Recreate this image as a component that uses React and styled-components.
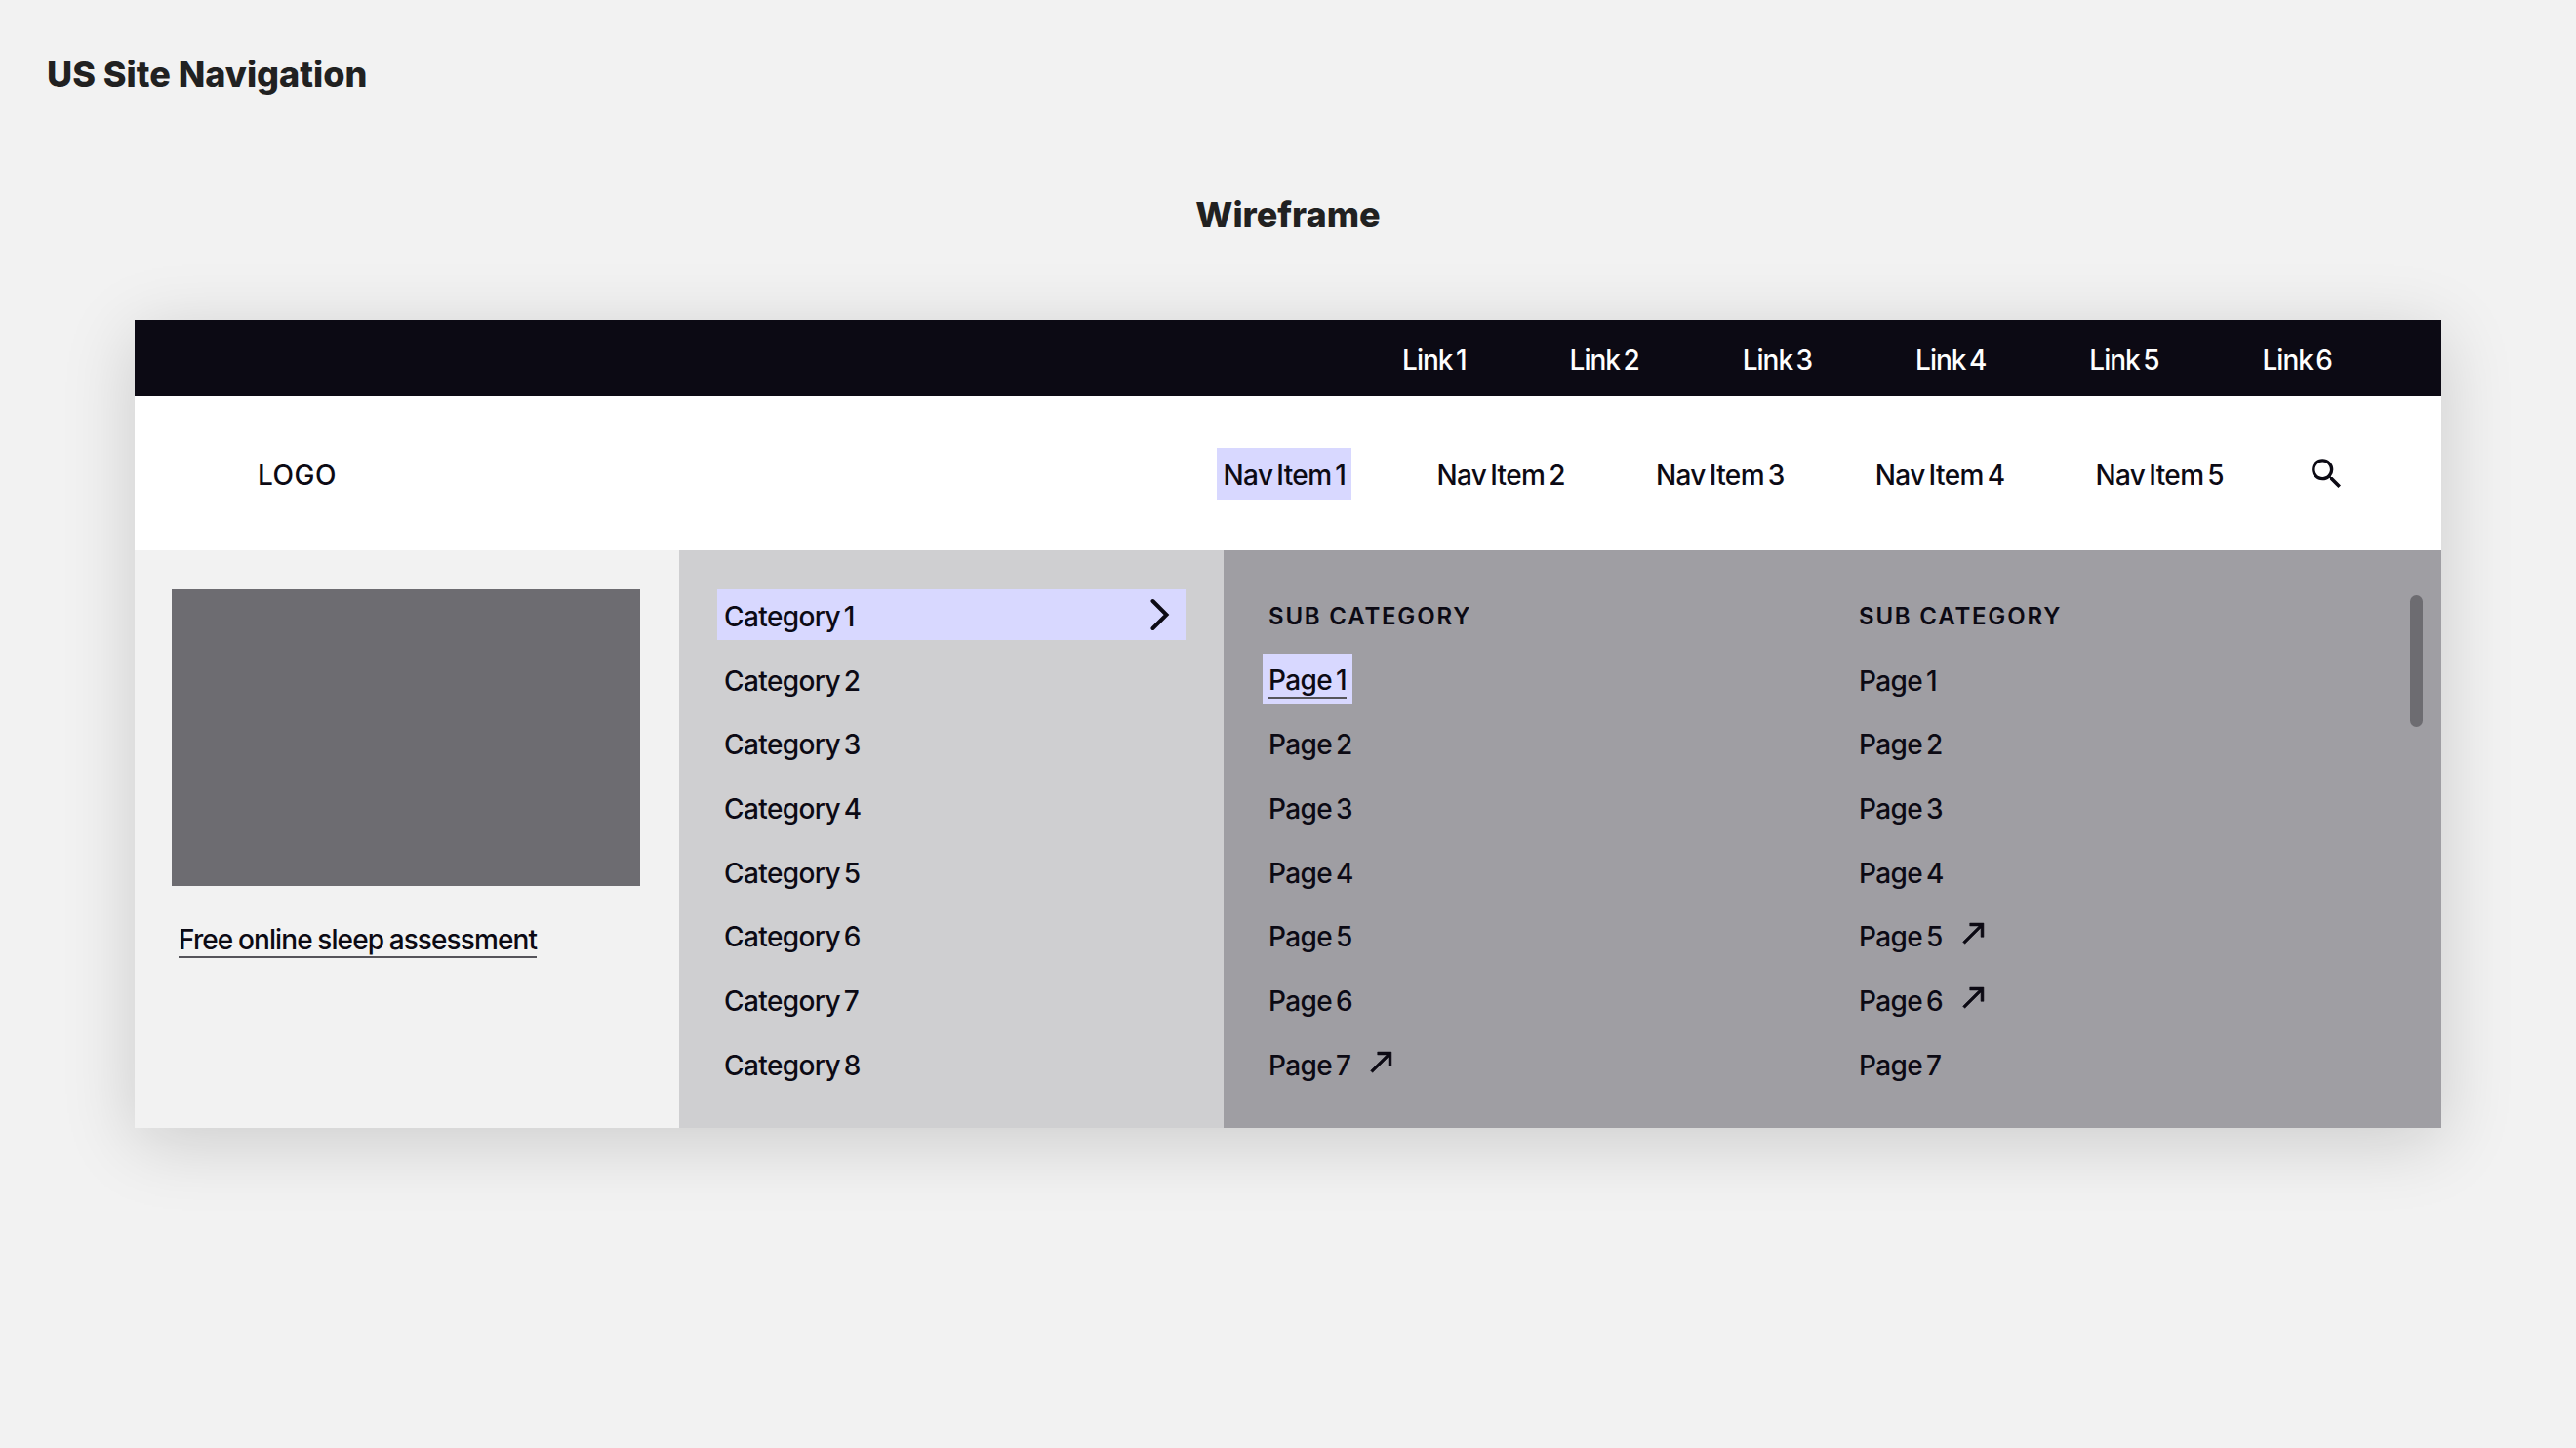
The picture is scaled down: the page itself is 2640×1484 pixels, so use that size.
import styled, { createGlobalStyle } from "styled-components";
import { MdSearch } from "react-icons/md";

const GlobalStyle = createGlobalStyle`
  html, body {
    margin: 0;
    padding: 0;
    background: #f2f2f2;
    font-family: "Inter", "Liberation Sans", sans-serif;
  }
`;

const Page = styled.div`
  width: 2640px;
  height: 1484px;
  overflow: hidden;
  padding-top: 54px;
  box-sizing: border-box;
`;

const Title = styled.h1`
  margin: 0 0 100px 48px;
  height: 44px;
  font-size: 36px;
  line-height: 44px;
  font-weight: 800;
  color: #212121;
`;

const Subtitle = styled.h2`
  margin: 0 0 86px;
  height: 44px;
  font-size: 36px;
  line-height: 44px;
  font-weight: 800;
  color: #212121;
  text-align: center;
`;

const Frame = styled.div`
  width: 2364px;
  margin: 0 auto;
  box-shadow: 0 14px 70px rgba(0, 0, 0, 0.16);
`;

const TopBar = styled.div`
  height: 78px;
  display: flex;
  align-items: center;
  justify-content: flex-end;
  gap: 106px;
  padding-right: 112px;
  background: #0c0a14;
`;

const TopLink = styled.span`
  padding-top: 3px;
  font-size: 28px;
  font-weight: 500;
  letter-spacing: -1px;
  word-spacing: -3px;
  color: #fff;
`;

const NavBar = styled.div`
  height: 158px;
  display: flex;
  align-items: center;
  justify-content: space-between;
  padding: 0 97px 0 126px;
  background: #fff;
`;

const Logo = styled.span`
  padding-top: 4px;
  font-size: 28px;
  font-weight: 500;
  letter-spacing: 0.5px;
  color: #0c0a14;
`;

const NavList = styled.div`
  display: flex;
  align-items: center;
  gap: 81px;
`;

const NavItem = styled.span`
  height: 53px;
  display: flex;
  align-items: center;
  padding: 3px 6px 0;
  box-sizing: border-box;
  font-size: 28px;
  font-weight: 500;
  letter-spacing: -0.6px;
  word-spacing: -3px;
  color: #0c0a14;
  background: ${(p) => (p.$active ? "#d8d8ff" : "transparent")};
`;

const SearchIcon = styled(MdSearch)`
  display: block;
  margin-left: -2px;
  color: #0c0a14;
`;

const Menu = styled.div`
  height: 592px;
  display: grid;
  grid-template-columns: 558px 558px 1248px;
`;

const FeatureCol = styled.div`
  padding: 40px 40px 0 38px;
  background: #f2f2f2;
`;

const FeatureImage = styled.div`
  width: 480px;
  height: 304px;
  background: #6d6c71;
`;

const FeatureLink = styled.a`
  display: inline-block;
  margin: 38px 0 0 7px;
  line-height: 34px;
  font-size: 28px;
  font-weight: 500;
  letter-spacing: -0.9px;
  word-spacing: -1px;
  color: #0c0a14;
  border-bottom: 2px solid #55545a;
`;

const CategoryCol = styled.div`
  padding: 40px 0 0 39px;
  background: #cfcfd1;
`;

const List = styled.div`
  display: flex;
  flex-direction: column;
  align-items: flex-start;
  gap: 13.7px;
`;

const CategoryRow = styled.div`
  width: 480px;
  height: 52px;
  box-sizing: border-box;
  display: flex;
  align-items: center;
  justify-content: space-between;
  padding: 4px 16px 0 7px;
  font-size: 28px;
  font-weight: 500;
  letter-spacing: -0.6px;
  word-spacing: -3px;
  color: #0c0a14;
  background: ${(p) => (p.$active ? "#d8d8ff" : "transparent")};

  svg {
    margin-top: -4px;
  }
`;

const PagesCol = styled.div`
  position: relative;
  display: grid;
  grid-template-columns: 605px 1fr;
  padding: 40px 0 0 40px;
  background: #9f9ea3;
`;

const SubHeading = styled.div`
  height: 52px;
  box-sizing: border-box;
  display: flex;
  align-items: center;
  padding: 3px 0 0 6px;
  font-size: 24px;
  font-weight: 600;
  letter-spacing: 1.8px;
  color: #0c0a14;
`;

const PageRow = styled.div`
  height: 52px;
  box-sizing: border-box;
  display: flex;
  align-items: center;
  padding: 4px 6px 0;
  font-size: 28px;
  font-weight: 500;
  letter-spacing: -0.6px;
  word-spacing: -3px;
  color: #0c0a14;
  background: ${(p) => (p.$active ? "#d8d8ff" : "transparent")};

  span {
    border-bottom: ${(p) => (p.$active ? "2px solid #55545a" : "0")};
  }
`;

const ArrowSvg = styled.svg`
  display: block;
  width: 34px;
  height: 34px;
  margin: -8px 0 0 15px;
`;

const Scrollbar = styled.div`
  position: absolute;
  top: 46px;
  right: 19px;
  width: 13px;
  height: 135px;
  border-radius: 7px;
  background: #6d6c71;
`;

const ExternalIcon = () => (
  <ArrowSvg viewBox="0 0 24 24">
    <path d="M9 5v2h6.59L4 18.59 5.41 20 17 8.41V15h2V5z" fill="#0c0a14" stroke="#0c0a14" strokeWidth="0.4" />
  </ArrowSvg>
);

const Chevron = () => (
  <svg width="20" height="34" viewBox="0 0 20 34" fill="none">
    <path d="M2.5 3L16.5 17L2.5 31" stroke="#0c0a14" strokeWidth="4" strokeLinecap="round" strokeLinejoin="miter" />
  </svg>
);

const links = [1, 2, 3, 4, 5, 6];
const navItems = [1, 2, 3, 4, 5];
const categories = [1, 2, 3, 4, 5, 6, 7, 8];
const pages = [1, 2, 3, 4, 5, 6, 7];

const PageColumn = ({ active, external = [] }) => (
  <List>
    <SubHeading>SUB CATEGORY</SubHeading>
    {pages.map((n) => (
      <PageRow key={n} $active={active === n}>
        <span>Page {n}</span>
        {external.includes(n) && <ExternalIcon />}
      </PageRow>
    ))}
  </List>
);

export default function App() {
  return (
    <Page>
      <GlobalStyle />
      <Title>US Site Navigation</Title>
      <Subtitle>Wireframe</Subtitle>
      <Frame>
        <TopBar>
          {links.map((n) => (
            <TopLink key={n}>Link {n}</TopLink>
          ))}
        </TopBar>
        <NavBar>
          <Logo>LOGO</Logo>
          <NavList>
            {navItems.map((n) => (
              <NavItem key={n} $active={n === 1}>
                Nav Item {n}
              </NavItem>
            ))}
            <SearchIcon size={41} />
          </NavList>
        </NavBar>
        <Menu>
          <FeatureCol>
            <FeatureImage />
            <FeatureLink>Free online sleep assessment</FeatureLink>
          </FeatureCol>
          <CategoryCol>
            <List>
              {categories.map((n) => (
                <CategoryRow key={n} $active={n === 1}>
                  Category {n}
                  {n === 1 && <Chevron />}
                </CategoryRow>
              ))}
            </List>
          </CategoryCol>
          <PagesCol>
            <PageColumn active={1} external={[7]} />
            <PageColumn external={[5, 6]} />
            <Scrollbar />
          </PagesCol>
        </Menu>
      </Frame>
    </Page>
  );
}
